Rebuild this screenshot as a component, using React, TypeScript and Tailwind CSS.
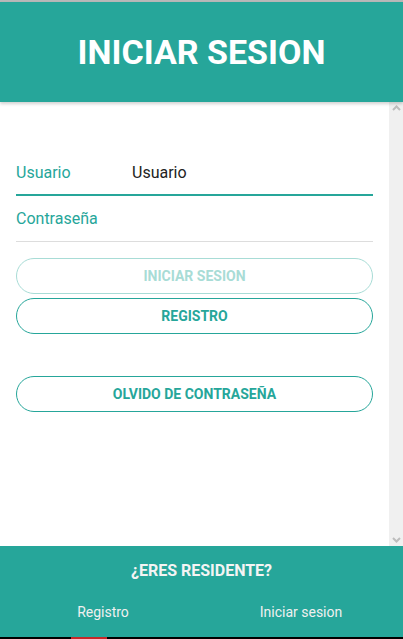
import { useState } from 'react'

function Field({ label, value, active }: { label: string; value: string; active?: boolean }) {
  return (
    <div
      className={`flex items-center text-[16px] ${
        active ? 'h-[45px] border-b-2 border-[#26a69a]' : 'h-[46px] border-b border-[#dddddd]'
      }`}
    >
      <span className="w-[116px] text-[#26a69a]">{label}</span>
      <span className="text-[#222222]">{value}</span>
    </div>
  )
}

function Btn({ children, disabled }: { children: string; disabled?: boolean }) {
  return (
    <button
      className={`h-[36px] w-full rounded-full border text-[14px] font-bold ${
        disabled ? 'border-[#a8dcd6] text-[#a8dcd6]' : 'border-[#26a69a] text-[#26a69a]'
      }`}
    >
      {children}
    </button>
  )
}

export default function App() {
  const [user] = useState('Usuario')
  return (
    <div className="flex h-[639px] flex-col overflow-hidden bg-white font-['Roboto',sans-serif]">
      <div className="h-[2px] bg-[#b8b8b8]" />
      <header className="relative z-10 flex h-[100px] items-center justify-center bg-[#26a69a] shadow-[0_2px_3px_rgba(0,0,0,0.18)]">
        <h1 className="text-[34px] font-bold text-white">INICIAR SESION</h1>
      </header>

      <div className="flex min-h-0 flex-1">
        <main className="flex-1 px-4 pt-[49px]">
          <Field label="Usuario" value={user} active />
          <Field label="Contraseña" value="" />

          <div className="mt-4 flex flex-col gap-[4px]">
            <Btn disabled>INICIAR SESION</Btn>
            <Btn>REGISTRO</Btn>
          </div>
          <div className="mt-[42px]">
            <Btn>OLVIDO DE CONTRASEÑA</Btn>
          </div>
        </main>

        <div className="flex w-[14px] flex-col items-center justify-between bg-[#f0f0f0] py-[3px]">
          <svg width="9" height="6" viewBox="0 0 9 6">
            <path d="M1 5 L4.5 1.5 L8 5" stroke="#bdbdbd" strokeWidth="2" fill="none" />
          </svg>
          <svg width="9" height="6" viewBox="0 0 9 6">
            <path d="M1 1 L4.5 4.5 L8 1" stroke="#bdbdbd" strokeWidth="2" fill="none" />
          </svg>
        </div>
      </div>

      <footer className="flex h-[91px] flex-col bg-[#26a69a] text-white">
        <div className="pt-[13px] text-center text-[16px] font-bold text-[#f4f4f4]">¿ERES RESIDENTE?</div>
        <nav className="mt-[19px] flex text-[14px] text-[#f0f0f0]">
          <span className="w-[206px] text-center">Registro</span>
          <span className="w-[190px] text-center">Iniciar sesion</span>
        </nav>
      </footer>
      <div className="flex h-[2px] bg-black">
        <div className="ml-[71px] w-[36px] bg-[#c62828]" />
      </div>
    </div>
  )
}
